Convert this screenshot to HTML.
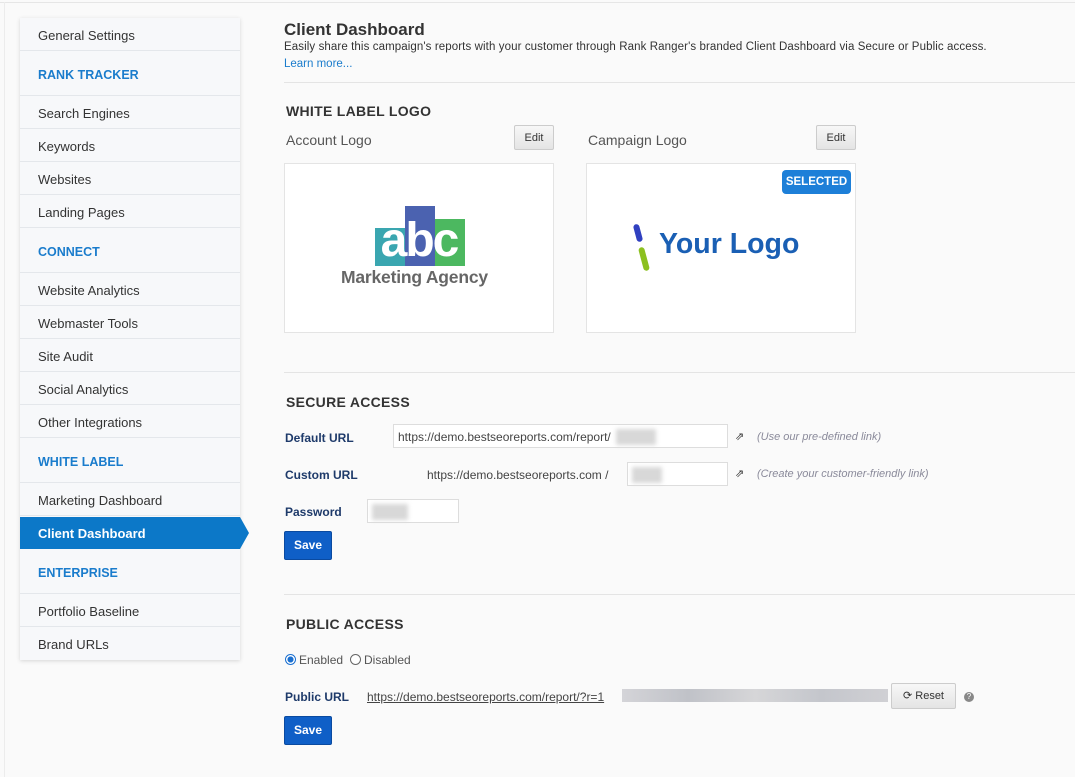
<!DOCTYPE html>
<html><head><meta charset="utf-8"><style>
*{box-sizing:border-box;margin:0;padding:0}
body{width:1075px;height:777px;background:#fafafa;font-family:"Liberation Sans",sans-serif;position:relative;overflow:hidden;color:#333}
.a{position:absolute}
.topl{left:0;top:2px;width:1075px;height:1px;background:#e6e6e6}
.lefl{left:4px;top:2px;width:1px;height:775px;background:#ececec}
.side{left:20px;top:18px;width:220px;height:642px;background:#f7f8fa;box-shadow:0 1px 4px rgba(0,0,0,.15)}
.it{position:absolute;left:0;width:220px;border-bottom:1px solid #e4e7eb;font-size:13px;color:#333;padding-left:18px}
.hd{color:#1a7ccc;font-weight:bold;font-size:12.5px}
.act{background:#0c78c8;color:#fff;font-weight:bold}
.lbl{font-weight:bold;color:#1e3a6a;font-size:12px}
.h2{font-weight:bold;color:#333;font-size:14px;letter-spacing:.3px}
.btn{background:linear-gradient(#f7f7f7,#e4e4e4);border:1px solid #ccc;border-radius:2px;font-size:11px;color:#333;text-align:center}
.save{background:#0f5fc7;border:1px solid #0a4aa0;color:#fff;font-weight:bold;font-size:12px;text-align:center;border-radius:2px;width:48px;height:29px;line-height:27px}
.inp{background:#fff;border:1px solid #ddd;height:24px}
.blur{background:#d8d8d8;filter:blur(2px)}
.note{font-style:italic;color:#8a8a9a;font-size:11px}
</style></head><body>
<div class="a topl"></div><div class="a lefl"></div>
<div class="a side">
<div class="it" style="top:0;height:33px;line-height:35px">General Settings</div>
<div class="it hd" style="top:33px;height:45px;line-height:48px">RANK TRACKER</div>
<div class="it" style="top:78px;height:33px;line-height:35px">Search Engines</div>
<div class="it" style="top:111px;height:33px;line-height:35px">Keywords</div>
<div class="it" style="top:144px;height:33px;line-height:35px">Websites</div>
<div class="it" style="top:177px;height:33px;line-height:35px">Landing Pages</div>
<div class="it hd" style="top:210px;height:45px;line-height:48px">CONNECT</div>
<div class="it" style="top:255px;height:33px;line-height:35px">Website Analytics</div>
<div class="it" style="top:288px;height:33px;line-height:35px">Webmaster Tools</div>
<div class="it" style="top:321px;height:33px;line-height:35px">Site Audit</div>
<div class="it" style="top:354px;height:33px;line-height:35px">Social Analytics</div>
<div class="it" style="top:387px;height:33px;line-height:35px">Other Integrations</div>
<div class="it hd" style="top:420px;height:45px;line-height:48px">WHITE LABEL</div>
<div class="it" style="top:465px;height:33px;line-height:35px">Marketing Dashboard</div>
<div class="it act" style="top:499px;height:32px;line-height:33px;border:0">Client Dashboard</div>
<div class="a" style="left:220px;top:499px;width:0;height:0;border-top:16px solid transparent;border-bottom:16px solid transparent;border-left:9px solid #0c78c8"></div>
<div class="it hd" style="top:531px;height:45px;line-height:48px">ENTERPRISE</div>
<div class="it" style="top:576px;height:33px;line-height:35px">Portfolio Baseline</div>
<div class="it" style="top:609px;height:33px;line-height:35px;border:0">Brand URLs</div>
</div>

<div class="a" style="left:284px;top:20px;font-size:17px;font-weight:bold;color:#333">Client Dashboard</div>
<div class="a" style="left:284px;top:41px;font-size:11.5px;color:#333;letter-spacing:.1px">Easily share this campaign's reports with your customer through Rank Ranger's branded Client Dashboard via Secure or Public access.</div>
<div class="a" style="left:284px;top:58px;font-size:11.5px;color:#1a7ccc">Learn more...</div>
<div class="a" style="left:284px;top:82px;width:791px;height:1px;background:#e4e4e4"></div>

<div class="a h2" style="left:286px;top:103px">WHITE LABEL LOGO</div>
<div class="a" style="left:286px;top:132px;font-size:14px;color:#555">Account Logo</div>
<div class="a btn" style="left:514px;top:125px;width:40px;height:25px;line-height:24px">Edit</div>
<div class="a" style="left:588px;top:132px;font-size:14px;color:#555">Campaign Logo</div>
<div class="a btn" style="left:816px;top:125px;width:40px;height:25px;line-height:24px">Edit</div>

<div class="a" style="left:284px;top:163px;width:270px;height:170px;background:#fff;border:1px solid #e4e4e4">
 <div class="a" style="left:90px;top:64px;width:30px;height:38px;background:#3aa6b0"></div>
 <div class="a" style="left:120px;top:42px;width:30px;height:60px;background:#4b62b0"></div>
 <div class="a" style="left:150px;top:55px;width:30px;height:47px;background:#4cb860"></div>
 <div class="a" style="left:84px;top:52px;width:100px;font-size:48px;font-weight:bold;color:#fff;letter-spacing:-2px;line-height:50px;text-align:center">abc</div>
 <div class="a" style="left:56px;top:103px;font-size:17.5px;color:#666;font-weight:bold;letter-spacing:-.2px">Marketing Agency</div>
</div>
<div class="a" style="left:586px;top:163px;width:270px;height:170px;background:#fff;border:1px solid #e4e4e4">
 <div class="a" style="left:195px;top:6px;width:69px;height:24px;background:#1d7fd8;border-radius:4px;color:#fff;font-weight:bold;font-size:11.5px;line-height:24px;text-align:center">SELECTED</div>
 <div class="a" style="left:48px;top:60px;width:6px;height:18px;background:#3040c0;transform:rotate(-15deg);border-radius:3px"></div>
 <div class="a" style="left:54px;top:83px;width:6px;height:24px;background:#8cc020;transform:rotate(-15deg);border-radius:3px"></div>
 <div class="a" style="left:72px;top:64px;font-size:28.5px;font-weight:bold;color:#1a5fb4">Your Logo</div>
</div>

<div class="a" style="left:284px;top:372px;width:791px;height:1px;background:#e4e4e4"></div>
<div class="a h2" style="left:286px;top:394px">SECURE ACCESS</div>
<div class="a lbl" style="left:285px;top:431px">Default URL</div>
<div class="a inp" style="left:393px;top:424px;width:335px"><span style="font-size:12px;color:#444;position:absolute;left:4px;top:5px">https://demo.bestseoreports.com/report/</span><div class="a blur" style="left:222px;top:4px;width:40px;height:16px"></div></div>
<div class="a" style="left:735px;top:430px;font-size:11px">⇗</div>
<div class="a note" style="left:757px;top:431px">(Use our pre-defined link)</div>
<div class="a lbl" style="left:285px;top:468px">Custom URL</div>
<div class="a" style="left:427px;top:468px;font-size:12px;color:#444">https://demo.bestseoreports.com /</div>
<div class="a inp" style="left:627px;top:462px;width:101px"><div class="a blur" style="left:4px;top:4px;width:30px;height:16px"></div></div>
<div class="a" style="left:735px;top:467px;font-size:11px">⇗</div>
<div class="a note" style="left:757px;top:468px">(Create your customer-friendly link)</div>
<div class="a lbl" style="left:285px;top:505px">Password</div>
<div class="a inp" style="left:367px;top:499px;width:92px"><div class="a blur" style="left:4px;top:4px;width:36px;height:16px"></div></div>
<div class="a save" style="left:284px;top:531px">Save</div>

<div class="a" style="left:284px;top:594px;width:791px;height:1px;background:#e4e4e4"></div>
<div class="a h2" style="left:286px;top:616px">PUBLIC ACCESS</div>
<div class="a" style="left:285px;top:654px;width:11px;height:11px;border-radius:50%;border:1px solid #1a6fd0;background:radial-gradient(#1a6fd0 45%,#fff 50%)"></div>
<div class="a" style="left:299px;top:653px;font-size:12px;color:#555">Enabled</div>
<div class="a" style="left:350px;top:654px;width:11px;height:11px;border-radius:50%;border:1px solid #666;background:#fff"></div>
<div class="a" style="left:364px;top:653px;font-size:12px;color:#555">Disabled</div>
<div class="a lbl" style="left:285px;top:690px">Public URL</div>
<div class="a" style="left:367px;top:690px;font-size:12px;color:#444;text-decoration:underline">https://demo.bestseoreports.com/report/?r=1</div>
<div class="a" style="left:622px;top:689px;width:266px;height:13px;background:linear-gradient(90deg,#d4d4d8,#c0c2c8,#d6d6d8,#c4c6cc,#d0d0d4)"></div>
<div class="a btn" style="left:891px;top:683px;width:65px;height:26px;line-height:25px;font-size:11px">⟳ Reset</div>
<div class="a" style="left:964px;top:692px;width:10px;height:10px;border-radius:50%;background:#888;color:#fff;font-size:8px;text-align:center;line-height:10px">?</div>
<div class="a save" style="left:284px;top:716px">Save</div>
</body></html>
